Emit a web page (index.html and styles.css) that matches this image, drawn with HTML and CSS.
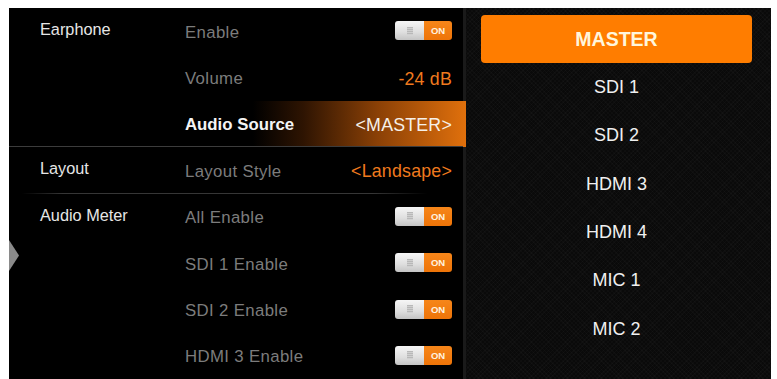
FILE: index.html
```html
<!DOCTYPE html>
<html>
<head>
<meta charset="utf-8">
<link rel="stylesheet" href="styles.css">
</head>
<body>
<div class="screen">
  <div class="left">
    <div class="group">
      <div class="glabel">Earphone</div>
      <div class="rows">
        <div class="row"><span class="name">Enable</span><span class="toggle"><span class="knob"><span class="grip"></span></span><span class="on">ON</span></span></div>
        <div class="row"><span class="name">Volume</span><span class="val">-24 dB</span></div>
        <div class="row active"><span class="name">Audio Source</span><span class="val">&lt;MASTER&gt;</span></div>
      </div>
    </div>
    <div class="group sep-full">
      <div class="glabel">Layout</div>
      <div class="rows">
        <div class="row"><span class="name">Layout Style</span><span class="val">&lt;Landsape&gt;</span></div>
      </div>
    </div>
    <div class="group sep-fade">
      <div class="glabel">Audio Meter</div>
      <div class="rows">
        <div class="row"><span class="name">All Enable</span><span class="toggle"><span class="knob"><span class="grip"></span></span><span class="on">ON</span></span></div>
        <div class="row"><span class="name">SDI 1 Enable</span><span class="toggle"><span class="knob"><span class="grip"></span></span><span class="on">ON</span></span></div>
        <div class="row"><span class="name">SDI 2 Enable</span><span class="toggle"><span class="knob"><span class="grip"></span></span><span class="on">ON</span></span></div>
        <div class="row"><span class="name">HDMI 3 Enable</span><span class="toggle"><span class="knob"><span class="grip"></span></span><span class="on">ON</span></span></div>
      </div>
    </div>
    <svg class="arrow" width="10" height="31" viewBox="0 0 10 31"><polygon points="0,0 10,15.5 0,31" fill="#8a8a8a"/></svg>
  </div>
  <div class="right">
    <div class="item sel">MASTER</div>
    <div class="item">SDI 1</div>
    <div class="item">SDI 2</div>
    <div class="item">HDMI 3</div>
    <div class="item">HDMI 4</div>
    <div class="item">MIC 1</div>
    <div class="item">MIC 2</div>
  </div>
</div>
</body>
</html>
```
FILE: styles.css
```css
html, body {
  margin: 0;
  padding: 0;
  background: #fff;
}
body {
  padding: 8px 0 0 9px;
  font-family: "Liberation Sans", Arial, sans-serif;
}
.screen {
  width: 762px;
  height: 371px;
  background: #000;
  display: flex;
  overflow: hidden;
}
.left {
  position: relative;
  width: 454px;
  border-right: 3px solid #1a1a1a;
  display: flex;
  flex-direction: column;
}
.group {
  display: flex;
}
.sep-full {
  margin-top: -1px;
  border-top: 1px solid #3c3c3c;
}
.sep-fade {
  margin-top: -1px;
  border-top: 1px solid #333;
  border-image: linear-gradient(90deg, transparent 0%, transparent 3%, #363636 12%, #363636 80%, transparent 92%) 1;
}
.glabel {
  width: 161px;
  flex: none;
  padding-left: 31px;
  height: 46.4px;
  padding-bottom: 3px;
  box-sizing: border-box;
  display: flex;
  align-items: center;
  color: #e6e6e6;
  font-size: 16.3px;
}
.rows {
  flex: 1;
  display: flex;
  flex-direction: column;
}
.row {
  height: 46.4px;
  box-sizing: border-box;
  padding: 3px 11px 0 15px;
  display: flex;
  align-items: center;
  justify-content: space-between;
}
.name {
  color: #7c7c7c;
  font-size: 16.8px;
  letter-spacing: 0.35px;
}
.val {
  color: #f07a1e;
  font-size: 17.8px;
  letter-spacing: 0.2px;
}
.row.active {
  margin-right: -3px;
  padding-right: 14px;
  background: linear-gradient(90deg, #000 0%, #000 28%, #2e1402 45%, #8a4006 70%, #e0700c 100%);
}
.row.active .name {
  color: #f4f4f4;
  font-weight: bold;
  letter-spacing: 0;
}
.row.active .val {
  color: #f6f0e8;
}
.toggle {
  width: 57px;
  height: 19px;
  border-radius: 3px;
  overflow: hidden;
  display: flex;
  margin-top: -4px;
}
.knob {
  width: 29px;
  background: linear-gradient(180deg, #f6f6f6 0%, #dedede 60%, #c4c4c4 100%);
  display: flex;
  align-items: center;
  justify-content: center;
}
.grip {
  width: 6px;
  height: 8px;
  background: repeating-linear-gradient(180deg, #b8b8b8 0, #b8b8b8 1px, #d0d0d0 1px, #d0d0d0 2px);
}
.on {
  flex: 1;
  background: linear-gradient(180deg, #f6861a 0%, #ee7408 100%);
  color: #fff3e0;
  font-size: 9.5px;
  font-weight: bold;
  display: flex;
  align-items: center;
  justify-content: center;
}
.arrow {
  position: absolute;
  left: 0;
  top: 232px;
}
.right {
  flex: 1;
  padding: 7px 19px 0 15px;
  background-color: #0a0a0a;
  background-image:
    repeating-linear-gradient(45deg, rgba(255,255,255,0.02) 0, rgba(255,255,255,0.02) 1px, transparent 1px, transparent 3px),
    repeating-linear-gradient(-45deg, rgba(255,255,255,0.02) 0, rgba(255,255,255,0.02) 1px, transparent 1px, transparent 3px);
  display: flex;
  flex-direction: column;
}
.item {
  height: 48.33px;
  flex: none;
  display: flex;
  align-items: center;
  justify-content: center;
  color: #f0f0f0;
  font-size: 18px;
}
.item.sel {
  background: #ff7d00;
  border-radius: 4px;
  color: #fff6dc;
  font-weight: bold;
  font-size: 19.5px;
}
```
